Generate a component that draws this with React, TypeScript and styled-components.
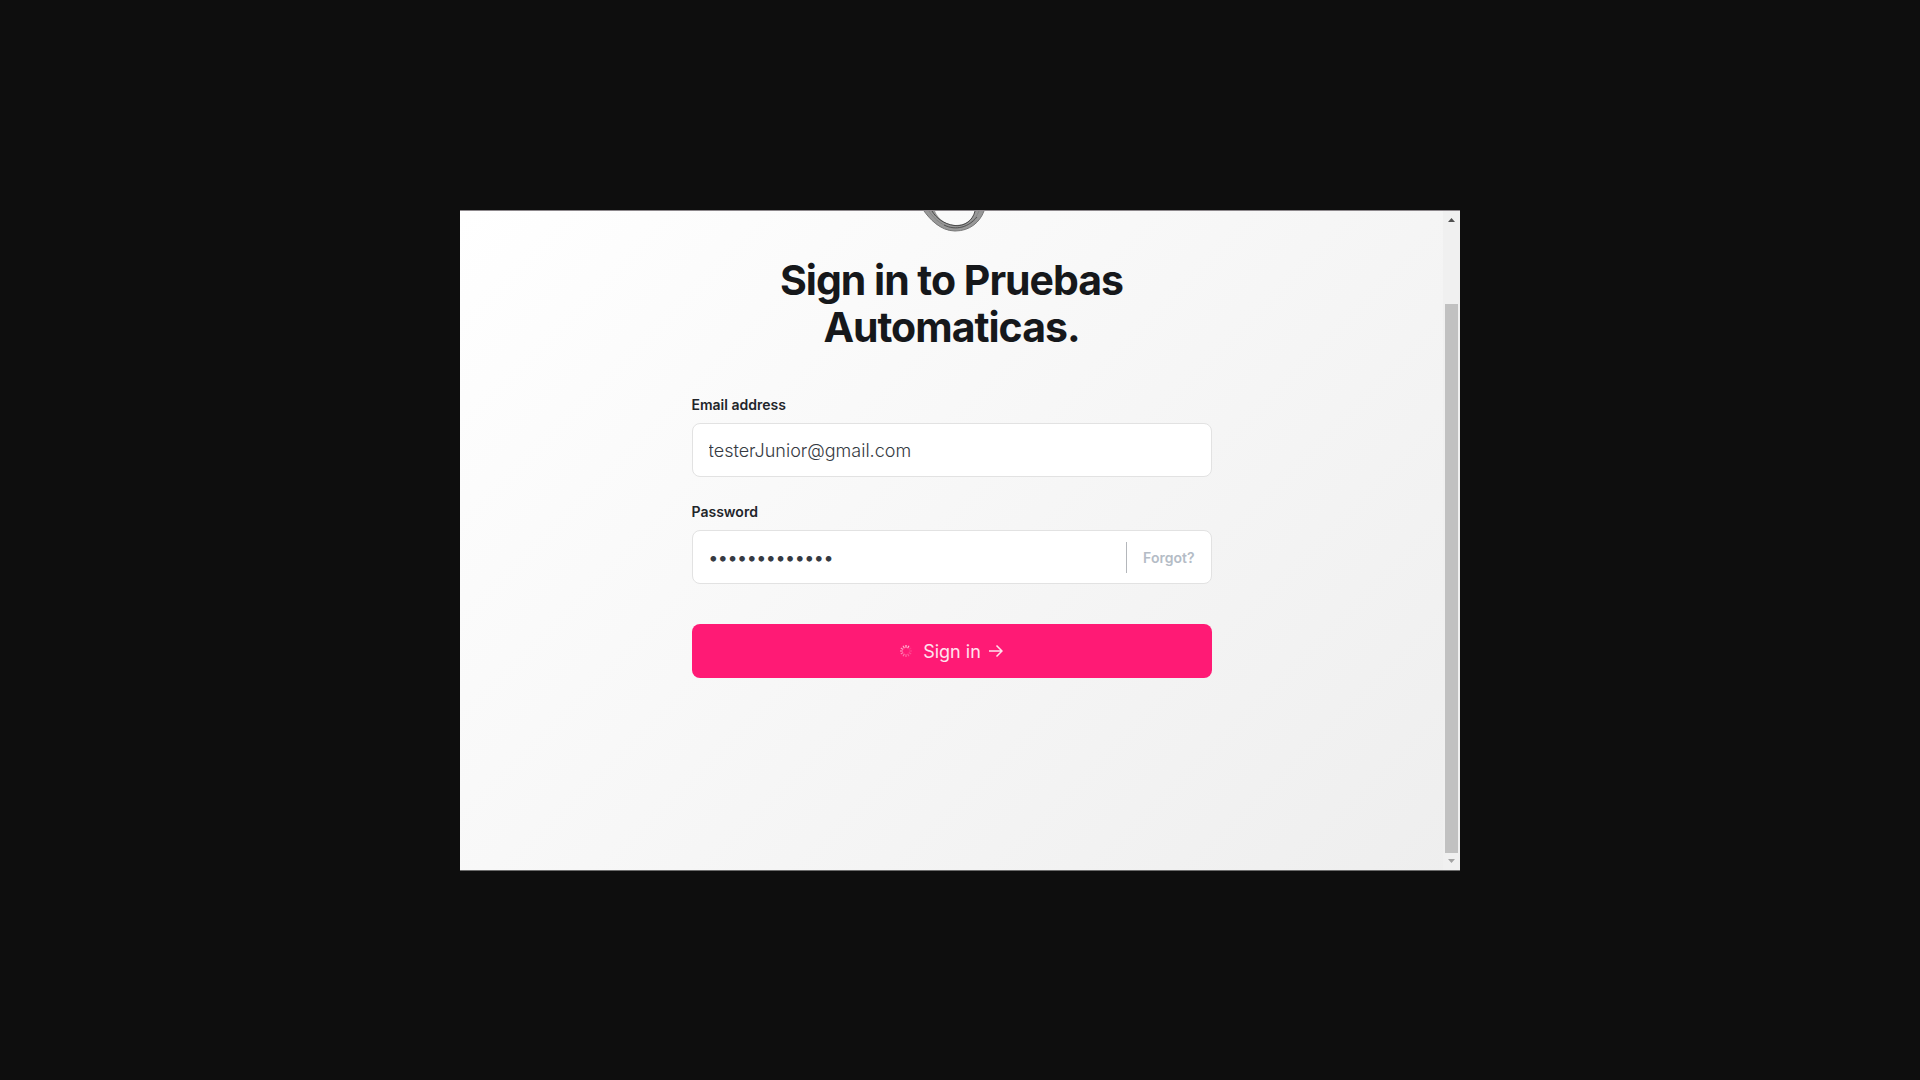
import React from "react";
import styled, { createGlobalStyle } from "styled-components";

const GlobalStyle = createGlobalStyle`
  *, *::before, *::after { box-sizing: border-box; }
  body {
    margin: 0;
    background: #0e0e0e;
    font-family: Inter, "Liberation Sans", sans-serif;
    -webkit-font-smoothing: antialiased;
  }
`;

const Stage = styled.div`
  min-height: 100vh;
  padding-top: 1px;
  display: flex;
  align-items: center;
  justify-content: center;
`;

const Frame = styled.div`
  width: 100%;
  max-width: 1000px;
  display: flex;
  border-top: 1px solid #8d888c;
  border-bottom: 1px solid #6c6c6c;
  background: linear-gradient(135deg, #ffffff, #eeeeee);
`;

const Main = styled.main`
  flex: 1;
  min-width: 0;
  display: flex;
  flex-direction: column;
  align-items: center;
  padding: 0 16px 192px;
`;

const Logo = styled.svg`
  display: block;
  width: 64px;
  height: 22px;
  margin-left: 4px;
`;

const Title = styled.h1`
  margin: 24px 0 43px;
  max-width: 400px;
  font-size: 41px;
  line-height: 47px;
  font-weight: 700;
  letter-spacing: -1px;
  text-align: center;
  color: #16181b;
`;

const Form = styled.form`
  width: 100%;
  max-width: 520px;
  display: flex;
  flex-direction: column;
`;

const Field = styled.div`
  display: flex;
  flex-direction: column;
  gap: 8px;
  margin-bottom: 24px;
`;

const Label = styled.label`
  font-size: 14px;
  line-height: 21px;
  font-weight: 600;
  color: #22252a;
`;

const Box = styled.div`
  display: flex;
  align-items: center;
  height: 54px;
  border: 1px solid #e2e2e2;
  border-radius: 8px;
  background: #ffffff;
`;

const Input = styled.input`
  flex: 1;
  min-width: 0;
  height: 100%;
  padding: 0 16px;
  border: 0;
  border-radius: 8px;
  outline: 0;
  background: transparent;
  font-family: inherit;
  font-size: 18px;
  font-weight: ${(p) => (p.type === "password" ? 500 : 300)};
  color: #363a42;
`;

const Forgot = styled.a`
  padding: 0 16px;
  border-left: 1px solid #b4b7bb;
  font-size: 14px;
  line-height: 31px;
  font-weight: 600;
  color: #b4bcc6;
  text-decoration: none;
`;

const Submit = styled.button`
  height: 54px;
  margin-top: 16px;
  display: flex;
  align-items: center;
  justify-content: center;
  border: 0;
  border-radius: 8px;
  background: #ff1a75;
  font-family: inherit;
  font-size: 18px;
  font-weight: 400;
  color: #ffe3ee;
`;

const SubmitText = styled.span`
  margin: 0 8px 0 11px;
`;

const Scrollbar = styled.div`
  width: 17px;
  display: flex;
  flex-direction: column;
  align-items: center;
  background: #f0f0f0;
`;

const Arrow = styled.svg`
  display: block;
  width: 17px;
  height: 17px;
`;

const Thumb = styled.div`
  flex: 1;
  width: 13px;
  margin-top: 76px;
  background: #c1c1c1;
`;

const spokes = [0.75, 0.7, 0.1, 0.15, 0.2, 0.28, 0.34, 0.4, 0.46, 0.52, 0.58, 0.65];

const LogoRing = () => (
  <Logo viewBox="0 0 64 22" fill="none" aria-hidden="true">
    <path d="M2 0C7 7 18 20 33 20C48 20 58 11 62 0H53C51 8 44 14 34 14C24 14 16 8 13 0Z" fill="#989898" />
    <path d="M2 0C7 7 18 20 33 20C48 20 58 11 62 0" stroke="#777" />
    <path d="M7 0C12 8 22 17 34 17C45 17 53 10 57 0" stroke="#858585" />
    <path d="M10 0C14 7 22 13 32 14.500C43 16 51 9 53 0" stroke="#4a4a4a" />
    <path d="M22 14C34 20 47 16 55 6" stroke="#555" />
  </Logo>
);

const Spinner = () => (
  <svg width="12" height="12" viewBox="0 0 12 12" aria-hidden="true">
    {spokes.map((opacity, i) => (
      <line
        key={i}
        x1="6"
        y1="0"
        x2="6"
        y2="2.800"
        stroke="#fff"
        strokeWidth="1.200"
        opacity={opacity}
        transform={`rotate(${i * 30} 6 6)`}
      />
    ))}
  </svg>
);

export default function App() {
  return (
    <>
      <GlobalStyle />
      <Stage>
        <Frame>
          <Main>
            <LogoRing />
            <Title>Sign in to Pruebas Automaticas.</Title>
            <Form onSubmit={(e) => e.preventDefault()}>
              <Field>
                <Label htmlFor="email">Email address</Label>
                <Box>
                  <Input id="email" type="email" defaultValue="testerJunior@gmail.com" />
                </Box>
              </Field>
              <Field>
                <Label htmlFor="password">Password</Label>
                <Box>
                  <Input id="password" type="password" defaultValue="testerJunior1" />
                  <Forgot href="#forgot">Forgot?</Forgot>
                </Box>
              </Field>
              <Submit type="submit">
                <Spinner />
                <SubmitText>Sign in</SubmitText>
                <svg width="14" height="14" viewBox="0 0 14 14" fill="none" stroke="#ffe3ee" strokeWidth="1.500" aria-hidden="true">
                  <path d="M0 7h13M7.500 1.500L13 7l-5.500 5.500" />
                </svg>
              </Submit>
            </Form>
          </Main>
          <Scrollbar aria-hidden="true">
            <Arrow viewBox="0 0 17 17">
              <path d="M5 11h7L8.500 7z" fill="#505050" />
            </Arrow>
            <Thumb />
            <Arrow viewBox="0 0 17 17">
              <path d="M5 6h7L8.500 10z" fill="#a3a3a3" />
            </Arrow>
          </Scrollbar>
        </Frame>
      </Stage>
    </>
  );
}
